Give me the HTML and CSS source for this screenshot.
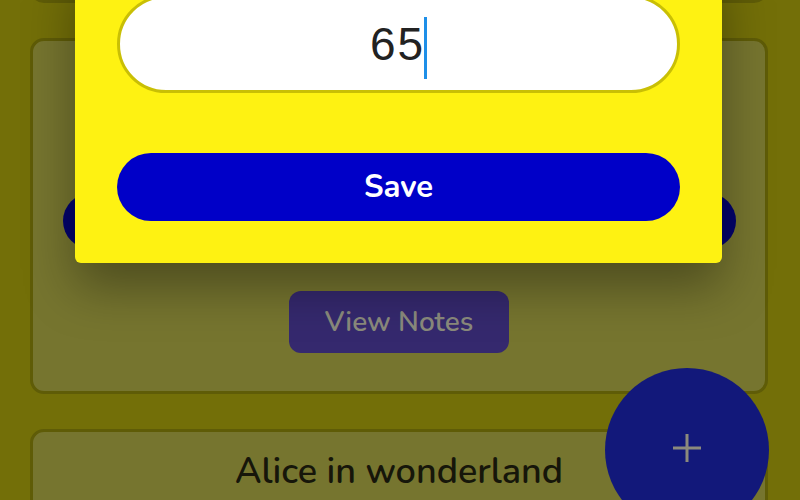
FILE: index.html
```html
<!DOCTYPE html>
<html lang="en">

<head>
  <meta charset="UTF-8">
  <meta name="viewport" content="width=device-width, initial-scale=1.0">
  <title>Books</title>
  <link rel="stylesheet" href="styles.css">
</head>

<body>
  <!--책 목록-->
  <div class="list">
    <div class="card card-prev"></div>

    <div class="card">
      <div class="card-title"></div>
      <button class="page-btn"></button>
      <button class="notes-btn">View Notes</button>
    </div>

    <div class="card">
      <div class="card-title">Alice in wonderland</div>
    </div>
  </div>

  <!--추가 버튼-->
  <button class="fab">
    <svg width="30" height="30" viewBox="0 0 30 30">
      <path d="M15 1V29M1 15H29" stroke="#8c8a7c" stroke-width="3" fill="none" />
    </svg>
  </button>

  <!--페이지 입력 모달-->
  <div class="modal">
    <div class="page-input">65<span class="caret"></span></div>
    <button class="save-btn">Save</button>
  </div>
</body>

</html>
```

FILE: styles.css
```css
/*기본*/
html,
body {
  margin: 0;
  height: 100%;
  overflow: hidden;
}

body {
  background-color: #736f08;
  font-family: "Nunito", "Lato", "Open Sans", sans-serif;
  position: relative;
}

button {
  font-family: inherit;
  border: none;
  cursor: pointer;
}

/*책 목록*/
.list {
  display: flex;
  flex-direction: column;
  gap: 35px;
  padding: 0 32px 0 30px;
  margin-top: -200px;
}

.card {
  background-color: #76752f;
  border: 3px solid #5f5c07;
  border-radius: 14px;
  display: flex;
  flex-direction: column;
  align-items: center;
  box-sizing: border-box;
}

.card-prev {
  height: 203px;
}

.card-title {
  font-size: 36px;
  font-weight: 600;
  color: #16160a;
  padding: 15px 0 0;
  height: 120px;
  box-sizing: border-box;
}

.page-btn {
  width: 673px;
  height: 56px;
  border-radius: 28px;
  background-color: #03036c;
  margin-top: 32px;
}

.notes-btn {
  width: 220px;
  height: 62px;
  border-radius: 12px;
  background-color: #35296e;
  color: #8a8a7c;
  font-size: 28px;
  font-weight: 600;
  margin: 42px 0 38px;
}

/*추가 버튼*/
.fab {
  position: absolute;
  left: 605px;
  top: 368px;
  width: 164px;
  height: 164px;
  border-radius: 50%;
  background-color: #12187a;
  display: flex;
  align-items: center;
  justify-content: center;
  padding: 0 0 4px;
}

/*모달*/
.modal {
  position: absolute;
  left: 75px;
  top: -40px;
  width: 647px;
  height: 303px;
  background-color: #fef212;
  border-radius: 6px;
  box-shadow: 0 24px 50px rgba(0, 0, 0, 0.35);
  padding: 35px 42px 0;
  box-sizing: border-box;
}

.page-input {
  height: 98px;
  background-color: #fff;
  border: 3px solid #c9bf05;
  border-radius: 49px;
  box-sizing: border-box;
  text-align: center;
  font-family: "Liberation Sans", "Roboto", sans-serif;
  font-size: 46px;
  letter-spacing: 2px;
  color: #222;
  line-height: 92px;
}

.caret {
  display: inline-block;
  width: 3px;
  height: 62px;
  background-color: #1e8fe8;
  vertical-align: middle;
  margin-left: -1px;
}

.save-btn {
  display: block;
  width: 100%;
  height: 68px;
  border-radius: 34px;
  background-color: #0000c8;
  color: #fff;
  font-size: 31px;
  font-weight: 700;
  margin-top: 60px;
}
```
